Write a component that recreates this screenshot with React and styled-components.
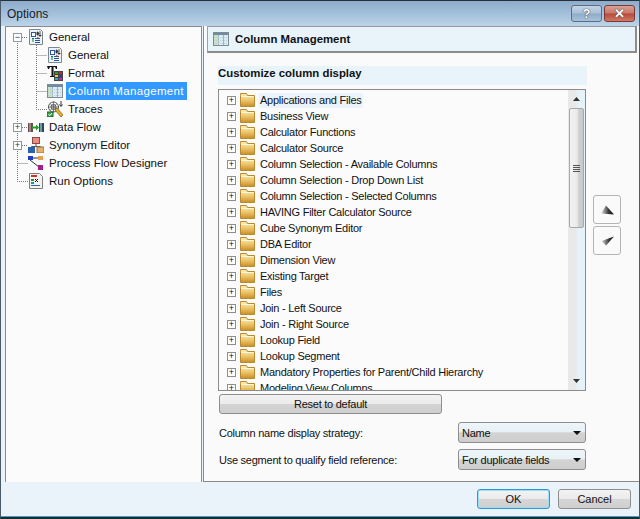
import React from 'react';
import styled, { createGlobalStyle } from 'styled-components';

const GlobalStyle = createGlobalStyle`
    html, body {
        margin: 0;
        padding: 0;
        overflow: hidden;
        background: #e9f3f9;
    }
    * {
        box-sizing: border-box;
    }
`;

const Ventana = styled.div`
    width: 640px;
    height: 519px;
    display: flex;
    flex-direction: column;
    background: #e9f3f9;
    font-family: 'Liberation Sans', Arial, sans-serif;
    font-size: 11px;
    letter-spacing: -0.25px;
    color: #111;
    border-left: 1px solid #4a5a68;
    border-right: 1px solid #4a5a68;
    border-top: 1px solid #26313a;
    border-bottom: 2px solid #1f2a33;
    box-shadow: inset 0 -1px 0 #3fa0d0;
`;

const BarraTitulo = styled.div`
    height: 25px;
    flex: none;
    display: flex;
    align-items: flex-start;
    justify-content: space-between;
    padding: 4px 4px 0 6px;
    background: linear-gradient(to bottom, #8eaccb 0%, #a3bfda 50%, #bcd4e9 100%);
    font-size: 12px;
    letter-spacing: 0;
    color: #16202a;
`;

const TituloTexto = styled.span`
    line-height: 18px;
`;

const BotonesVentana = styled.div`
    display: flex;
    gap: 2px;
`;

const BotonCaption = styled.div`
    height: 17px;
    width: ${(p) => p.$w}px;
    display: flex;
    align-items: center;
    justify-content: center;
    border: 1px solid ${(p) => (p.$close ? '#7a3a33' : '#5b6f84')};
    border-radius: 3px;
    color: #fff;
    font-weight: bold;
    font-size: 13px;
    text-shadow: 0 0 1px #333, 0 0 1px #333;
    background: ${(p) =>
        p.$close
            ? 'linear-gradient(to bottom, #d9a196 0%, #c9776a 48%, #b7493a 52%, #cf7a66 100%)'
            : 'linear-gradient(to bottom, #c3d5e6 0%, #a8c0d8 48%, #8fabc8 52%, #a7c2da 100%)'};
`;

const Cuerpo = styled.div`
    height: 456px;
    flex: none;
    display: flex;
    padding-left: 4px;
`;

const PanelArbol = styled.div`
    position: relative;
    width: 197px;
    flex: none;
    background: #fbfbfb;
    border: 1px solid #8b8b8b;
    border-bottom: none;
    padding-top: 1px;
`;

const LineasArbol = styled.svg`
    position: absolute;
    left: 0;
    top: 0;
    pointer-events: none;
`;

const FilaArbol = styled.div`
    height: 18px;
    display: flex;
    align-items: center;
    padding-left: ${(p) => (p.$hijo ? 41 : 22)}px;
    position: relative;
`;

const IconoArbol = styled.span`
    width: 16px;
    height: 16px;
    flex: none;
    display: block;
    & > svg {
        display: block;
    }
`;

const TextoArbol = styled.span`
    margin-left: 3px;
    padding: 0 2px;
    line-height: 18px;
    font-size: 11.5px;
    white-space: nowrap;
    letter-spacing: ${(p) => (p.$activo ? '0.35px' : '0')};
    width: ${(p) => (p.$activo ? '121px' : 'auto')};
    background: ${(p) => (p.$activo ? '#3399ff' : 'transparent')};
    color: ${(p) => (p.$activo ? '#fff' : '#111')};
`;

const Expansor = styled.span`
    position: absolute;
    left: 7px;
    top: 5px;
    width: 9px;
    height: 9px;
    background: #fff;
    border: 1px solid #8a98a8;
    display: flex;
    align-items: center;
    justify-content: center;
    font-size: 9px;
    line-height: 7px;
    letter-spacing: 0;
    color: #203a5a;
`;

const PanelPrincipal = styled.div`
    flex: 1;
    margin-left: 1px;
    background: #fafafa;
    border-left: 1px solid #8b8b8b;
    border-bottom: 1px solid #8b8b8b;
    padding-left: 3px;
    display: flex;
    flex-direction: column;
`;

const Cabecera = styled.div`
    height: 27px;
    flex: none;
    display: flex;
    align-items: center;
    gap: 6px;
    padding-left: 5px;
    margin-right: 2px;
    background: #e8f4fa;
    border: 1px solid #a0a0a0;
    border-right: 2px solid #8c8c8c;
    border-bottom: 2px solid #8c8c8c;
    border-top: 1px solid #9a9a9a;
    font-weight: bold;
    font-size: 11.4px;
    letter-spacing: 0;
`;

const Contenido = styled.div`
    display: flex;
    padding: 13px 0 0 11px;
`;

const ColumnaLista = styled.div`
    width: 369px;
    flex: none;
`;

const TituloSeccion = styled.div`
    height: 19px;
    line-height: 14px;
    background: #e8f4fa;
    font-weight: bold;
    font-size: 11.4px;
    letter-spacing: 0;
    margin-bottom: 4px;
`;

const CajaLista = styled.div`
    height: 302px;
    width: 368px;
    border: 1px solid #8b8b8b;
    background: #fbfbfb;
    display: flex;
    overflow: hidden;
`;

const Filas = styled.div`
    flex: 1;
    padding-top: 2px;
    overflow: hidden;
`;

const FilaLista = styled.div`
    height: 16px;
    display: flex;
    align-items: center;
    padding-left: 8px;
    white-space: nowrap;
`;

const MasCaja = styled.span`
    width: 9px;
    height: 9px;
    flex: none;
    border: 1px solid #8f8f8f;
    background: #fff;
    display: flex;
    align-items: center;
    justify-content: center;
    font-size: 9px;
    line-height: 7px;
    letter-spacing: 0;
    color: #111;
`;

const IconoCarpeta = styled.span`
    margin-left: 4px;
    width: 16px;
    height: 16px;
    flex: none;
    & > svg {
        display: block;
    }
`;

const TextoFila = styled.span`
    margin-left: 3px;
    padding: 0 1px;
    background: ${(p) => (p.$foco ? '#eaf4fa' : 'transparent')};
    line-height: 15px;
`;

const BarraScroll = styled.div`
    width: 17px;
    flex: none;
    display: flex;
    flex-direction: column;
    align-items: center;
    background: linear-gradient(to right, #e9e9e9 0%, #e9e9e9 45%, #e6f2f9 60%, #e6f2f9 100%);
`;

const FlechaScroll = styled.div`
    height: 18px;
    flex: none;
    width: 100%;
    display: flex;
    align-items: center;
    justify-content: center;
    & > svg {
        display: block;
    }
`;

const Pulgar = styled.div`
    width: 15px;
    height: 120px;
    flex: none;
    display: flex;
    align-items: center;
    justify-content: center;
    border: 1px solid #a8a8a8;
    border-radius: 2px;
    background: linear-gradient(to right, #f2f2f2 0%, #ececec 50%, #cfcfcf 70%, #c8c8c8 100%);
`;

const Muesca = styled.div`
    width: 7px;
    height: 7px;
    background: repeating-linear-gradient(to bottom, #555 0, #555 1px, transparent 1px, transparent 2px);
`;

const Hueco = styled.div`
    flex: 1;
`;

const BotonReset = styled.div`
    width: 223px;
    height: 20px;
    margin: 3px 0 0 1px;
    display: flex;
    align-items: center;
    justify-content: center;
    border: 1px solid #8e8e8e;
    border-radius: 3px;
    background: linear-gradient(to bottom, #f3f3f3 0%, #ebebeb 48%, #d4d4d4 52%, #cfcfcf 100%);
`;

const FilaOpcion = styled.div`
    display: flex;
    align-items: center;
    justify-content: space-between;
    width: 368px;
    height: 21px;
    padding-left: 1px;
    margin-top: ${(p) => p.$mt}px;
`;

const Etiqueta = styled.span`
    white-space: nowrap;
`;

const Selector = styled.div`
    width: 128px;
    height: 21px;
    display: flex;
    align-items: center;
    justify-content: space-between;
    padding: 0 4px 0 3px;
    border: 1px solid #8e8e8e;
    border-radius: 3px;
    background: linear-gradient(to bottom, #eef6fb 0%, #e8f1f6 45%, #d3d3d3 52%, #cecece 100%);
`;

const Triangulo = styled.span`
    width: 0;
    height: 0;
    border-left: 4px solid transparent;
    border-right: 4px solid transparent;
    border-top: 4px solid #111;
`;

const ColumnaBotones = styled.div`
    margin: 129px 0 0 6px;
    display: flex;
    flex-direction: column;
    gap: 2px;
`;

const BotonMover = styled.div`
    width: 28px;
    height: 29px;
    display: flex;
    align-items: center;
    justify-content: center;
    border: 1px solid #b4b4b4;
    border-radius: 3px;
    background: #fafafa;
`;

const PiePagina = styled.div`
    flex: 1;
    display: flex;
    justify-content: flex-end;
    gap: 8px;
    padding: 7px 8px 0 0;
`;

const BotonPie = styled.div`
    width: 73px;
    height: 20px;
    display: flex;
    align-items: center;
    justify-content: center;
    letter-spacing: 0;
    border: 1px solid ${(p) => (p.$principal ? '#2f9ad0' : '#8e8e8e')};
    border-radius: 3px;
    box-shadow: ${(p) => (p.$principal ? 'inset 0 0 0 1px #9fdcf5' : 'none')};
    background: linear-gradient(to bottom, #f3f3f3 0%, #ebebeb 48%, #d6d6d6 52%, #cfcfcf 100%);
`;

const IconoGeneral = () => (
    <svg width="16" height="16" viewBox="0 0 16 16">
        <path d="M1.5 .5h11l2 2v13h-13z" fill="#eef3f8" stroke="#7d8791" />
        <rect x="3.500" y="3.500" width="4" height="4" fill="#fff" stroke="#2b56a8" />
        <path d="M9 3h1v1h1v1h-1v1h-1zM11 6h2v1h-2zM12 2v3" stroke="#333" strokeWidth=".8" fill="#333" />
        <path d="M5 9v4M4 10l1-1 1 1" stroke="#1f7a4a" fill="none" />
        <path d="M7 9.500h5M7 11.500h5M7 13.500h5" stroke="#2b56a8" />
        <path d="M9 8l3 2" stroke="#b03030" strokeWidth=".8" />
    </svg>
);

const IconoFormato = () => (
    <svg width="16" height="16" viewBox="0 0 16 16">
        <path d="M0 1h10v3h-1l-1-2h-1.500v9h1.500v1h-5v-1h1.500v-9h-1.500l-1 2h-1z" fill="#111" />
        <rect x="7" y="6" width="9" height="10" fill="#444" />
        <rect x="8" y="7" width="3" height="2" fill="#2e9b3a" />
        <rect x="12" y="7" width="3" height="2" fill="#e02020" />
        <rect x="8" y="10" width="3" height="2" fill="#f0d020" />
        <rect x="12" y="10" width="3" height="2" fill="#2040d0" />
        <rect x="8" y="13" width="3" height="2" fill="#20b0d0" />
        <rect x="12" y="13" width="3" height="2" fill="#d020c0" />
    </svg>
);

const IconoColumnas = () => (
    <svg width="16" height="16" viewBox="0 0 16 16">
        <rect x=".5" y="1.500" width="15" height="13" fill="#dcecf5" stroke="#7f8c96" />
        <rect x="1" y="2" width="14" height="2" fill="#6f8aa6" />
        <path d="M5.500 4v10M10.500 4v10" stroke="#9fb4c4" />
        <rect x="1" y="4" width="4" height="10" fill="#c9e4b8" />
        <path d="M1 6.500h14M1 9.500h14M1 12.500h14" stroke="#b9ccd8" strokeDasharray="1 1" />
    </svg>
);

const IconoTrazas = () => (
    <svg width="16" height="16" viewBox="0 0 16 16">
        <circle cx="6.500" cy="6" r="5" fill="none" stroke="#555" />
        <circle cx="6.500" cy="6" r="2.500" fill="none" stroke="#555" />
        <path d="M1 6h11M6.500 .5v11M3 2.500l7 7M10 2.500l-7 7" stroke="#555" strokeWidth=".7" />
        <path d="M14 0v5M12.500 3.500l1.500 2 1.500-2" stroke="#333" fill="none" />
        <path d="M8 9l2-2 6 7-2 2z" fill="#e8b020" stroke="#7a5a10" strokeWidth=".7" />
        <rect x="0" y="11" width="6" height="5" fill="#3aa04a" stroke="#1f6a2a" />
        <path d="M1.500 13.500l1.500 1 2-2.500" stroke="#fff" fill="none" />
    </svg>
);

const IconoFlujo = () => (
    <svg width="16" height="16" viewBox="0 0 16 16">
        <rect x="0" y="4" width="5" height="9" fill="#6b4a4a" />
        <rect x="1" y="4" width="2" height="9" fill="#a08484" />
        <rect x="11" y="4" width="5" height="9" fill="#2a4a58" />
        <rect x="12" y="4" width="2" height="9" fill="#6f98a8" />
        <path d="M4 8.500h6" stroke="#1fa020" strokeWidth="2" />
        <path d="M8 5.500l3 3-3 3z" fill="#1fa020" />
    </svg>
);

const IconoSinonimo = () => (
    <svg width="16" height="16" viewBox="0 0 16 16">
        <rect x="4.500" y=".5" width="7" height="6" fill="#f08a80" stroke="#8a4a48" />
        <path d="M8 7v2M3.500 9.500h9M3.500 9.500v1M12.500 9.500v1" stroke="#555" fill="none" />
        <rect x="0" y="10" width="7" height="6" fill="#2a62b0" />
        <rect x="9" y="10" width="7" height="6" fill="#e8b070" stroke="#9a7040" />
    </svg>
);

const IconoProceso = () => (
    <svg width="16" height="16" viewBox="0 0 16 16">
        <rect x="0" y="1" width="5" height="4" fill="#2040c0" />
        <rect x="10" y="1" width="5" height="4" fill="#e8a050" />
        <path d="M5 3h5M2 5l9 7" stroke="#333" fill="none" />
        <rect x="10" y="10" width="5" height="5" fill="#a01f90" />
    </svg>
);

const IconoEjecutar = () => (
    <svg width="16" height="16" viewBox="0 0 16 16">
        <path d="M1.500 .5h10l3 3v12h-13z" fill="#f3f3ee" stroke="#7d7d7d" />
        <rect x="3" y="2" width="6" height="2" fill="#d03030" />
        <rect x="3" y="6" width="3" height="2" fill="#2a8a4a" />
        <path d="M7 6l3 3M10 6l-3 3" stroke="#111" />
        <rect x="3" y="9" width="3" height="2" fill="#2a8a9a" />
        <path d="M3 12.500h9" stroke="#2a62b0" />
    </svg>
);

const Carpeta = () => (
    <svg width="16" height="16" viewBox="0 0 16 16">
        <defs>
            <linearGradient id="carpeta" x1="0" y1="0" x2="0" y2="1">
                <stop offset="0" stopColor="#fdf0c0" />
                <stop offset="0.5" stopColor="#eec66e" />
                <stop offset="1" stopColor="#c98f25" />
            </linearGradient>
        </defs>
        <path d="M.5 3.500V1.500h6l1 2h7v11H.5z" fill="url(#carpeta)" stroke="#b98a2c" />
        <path d="M1 4.500h13" stroke="#fff6d8" />
    </svg>
);

const FlechaMover = ({ d, id }) => (
    <svg width="16" height="12" viewBox="0 0 16 12">
        <defs>
            <linearGradient id={id} x1="0" y1="0" x2="1" y2="0">
                <stop offset="0" stopColor="#e4e4e4" />
                <stop offset="0.6" stopColor="#333" />
                <stop offset="1" stopColor="#111" />
            </linearGradient>
        </defs>
        <path d={d} fill={`url(#${id})`} />
    </svg>
);

const arbol = [
    { id: 'g', texto: 'General', icono: <IconoGeneral />, exp: '−' },
    { id: 'g2', texto: 'General', icono: <IconoGeneral />, hijo: true },
    { id: 'f', texto: 'Format', icono: <IconoFormato />, hijo: true },
    { id: 'c', texto: 'Column Management', icono: <IconoColumnas />, hijo: true, activo: true },
    { id: 't', texto: 'Traces', icono: <IconoTrazas />, hijo: true },
    { id: 'd', texto: 'Data Flow', icono: <IconoFlujo />, exp: '+' },
    { id: 's', texto: 'Synonym Editor', icono: <IconoSinonimo />, exp: '+' },
    { id: 'p', texto: 'Process Flow Designer', icono: <IconoProceso /> },
    { id: 'r', texto: 'Run Options', icono: <IconoEjecutar /> },
];

const filas = [
    'Applications and Files',
    'Business View',
    'Calculator Functions',
    'Calculator Source',
    'Column Selection - Available Columns',
    'Column Selection - Drop Down List',
    'Column Selection - Selected Columns',
    'HAVING Filter Calculator Source',
    'Cube Synonym Editor',
    'DBA Editor',
    'Dimension View',
    'Existing Target',
    'Files',
    'Join - Left Source',
    'Join - Right Source',
    'Lookup Field',
    'Lookup Segment',
    'Mandatory Properties for Parent/Child Hierarchy',
    'Modeling View Columns',
];

const App = () => {
    return (
        <Ventana>
            <GlobalStyle />
            <BarraTitulo>
                <TituloTexto>Options</TituloTexto>
                <BotonesVentana>
                    <BotonCaption $w={31}>?</BotonCaption>
                    <BotonCaption $w={31} $close>✕</BotonCaption>
                </BotonesVentana>
            </BarraTitulo>
            <Cuerpo>
                <PanelArbol>
                    <LineasArbol width="195" height="200">
                        <g stroke="#777" strokeDasharray="1 1" fill="none">
                            <path d="M11.500 16V154.500H22" />
                            <path d="M30.500 18V82.500H41" />
                            <path d="M30.500 28.500H41M30.500 46.500H41M30.500 64.500H41" />
                            <path d="M16 100.500H22M16 118.500H22M11.500 136.500H22M16 10.500H22" />
                        </g>
                    </LineasArbol>
                    {arbol.map((n) => (
                        <FilaArbol key={n.id} $hijo={n.hijo}>
                            {n.exp && <Expansor>{n.exp}</Expansor>}
                            <IconoArbol>{n.icono}</IconoArbol>
                            <TextoArbol $activo={n.activo}>{n.texto}</TextoArbol>
                        </FilaArbol>
                    ))}
                </PanelArbol>
                <PanelPrincipal>
                    <Cabecera>
                        <IconoColumnas />
                        Column Management
                    </Cabecera>
                    <Contenido>
                        <ColumnaLista>
                            <TituloSeccion>Customize column display</TituloSeccion>
                            <CajaLista>
                                <Filas>
                                    {filas.map((f, i) => (
                                        <FilaLista key={f}>
                                            <MasCaja>+</MasCaja>
                                            <IconoCarpeta><Carpeta /></IconoCarpeta>
                                            <TextoFila $foco={i === 0}>{f}</TextoFila>
                                        </FilaLista>
                                    ))}
                                </Filas>
                                <BarraScroll>
                                    <FlechaScroll>
                                        <svg width="7" height="4" viewBox="0 0 7 4"><path d="M3.500 0L7 4H0z" fill="#333" /></svg>
                                    </FlechaScroll>
                                    <Pulgar><Muesca /></Pulgar>
                                    <Hueco />
                                    <FlechaScroll>
                                        <svg width="7" height="4" viewBox="0 0 7 4"><path d="M0 0h7L3.500 4z" fill="#333" /></svg>
                                    </FlechaScroll>
                                </BarraScroll>
                            </CajaLista>
                            <BotonReset>Reset to default</BotonReset>
                            <FilaOpcion $mt={8}>
                                <Etiqueta>Column name display strategy:</Etiqueta>
                                <Selector>Name<Triangulo /></Selector>
                            </FilaOpcion>
                            <FilaOpcion $mt={6}>
                                <Etiqueta>Use segment to qualify field reference:</Etiqueta>
                                <Selector>For duplicate fields<Triangulo /></Selector>
                            </FilaOpcion>
                        </ColumnaLista>
                        <ColumnaBotones>
                            <BotonMover>
                                <FlechaMover id="subir" d="M7 1.500L15 10.500 2 9.500z" />
                            </BotonMover>
                            <BotonMover>
                                <FlechaMover id="bajar" d="M15 1.500L7 10.500 2.500 6z" />
                            </BotonMover>
                        </ColumnaBotones>
                    </Contenido>
                </PanelPrincipal>
            </Cuerpo>
            <PiePagina>
                <BotonPie $principal>OK</BotonPie>
                <BotonPie>Cancel</BotonPie>
            </PiePagina>
        </Ventana>
    );
};

export default App;
